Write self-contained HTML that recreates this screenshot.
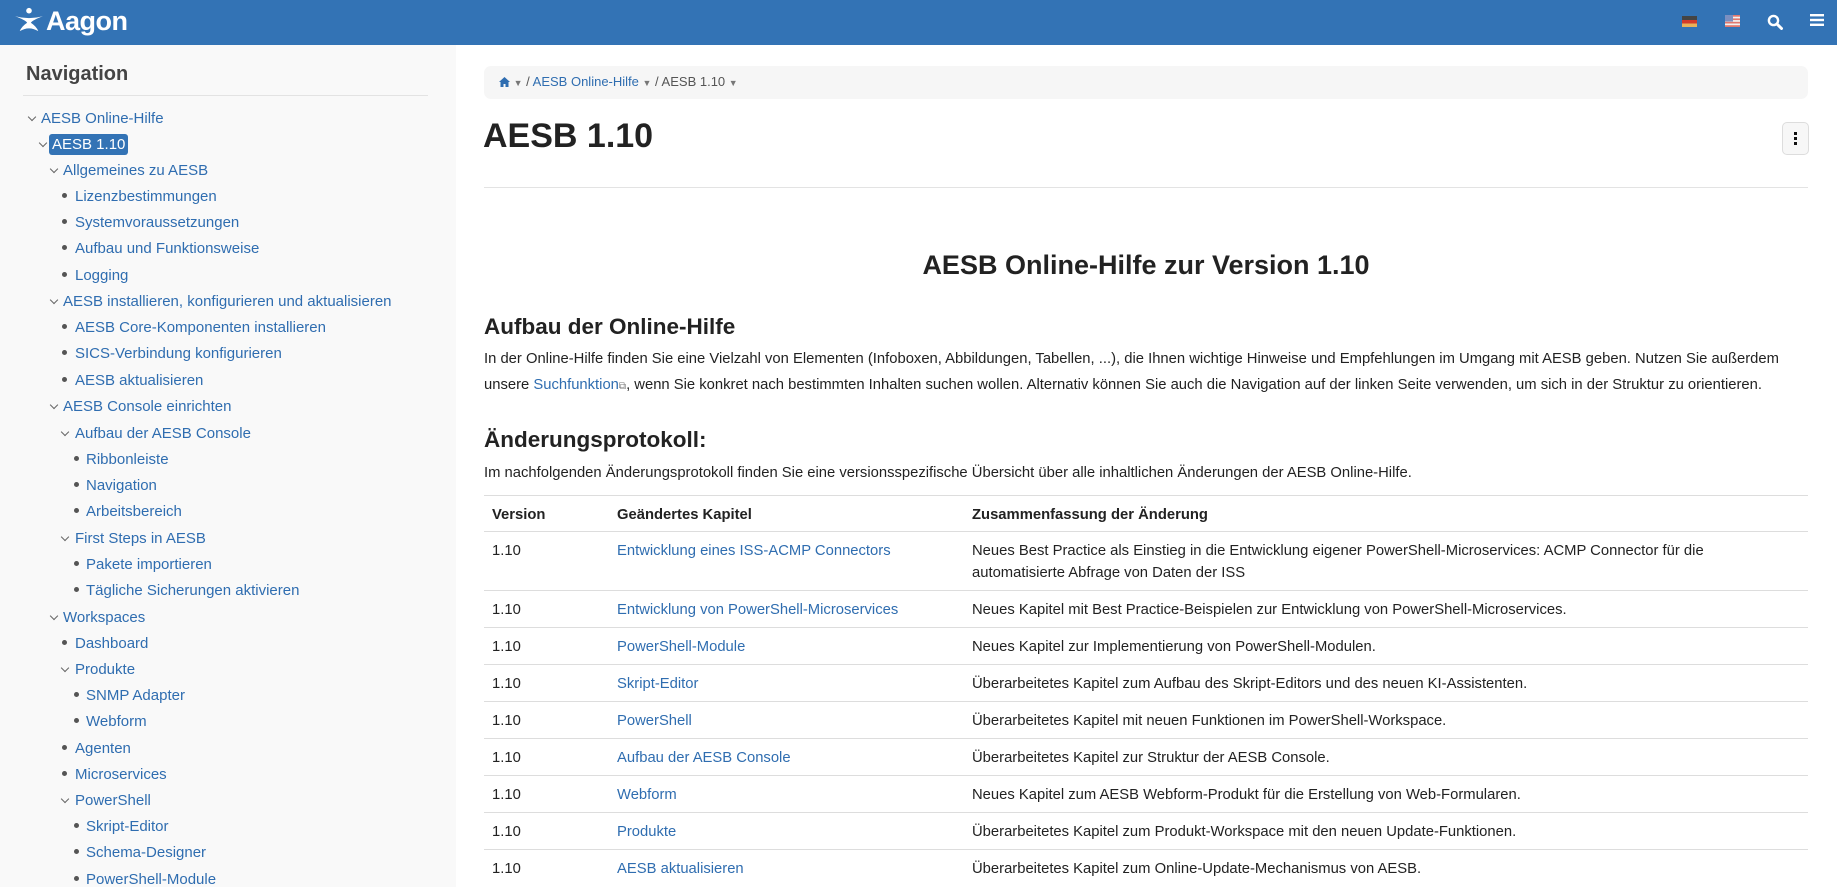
<!DOCTYPE html>
<html><head><meta charset="utf-8"><style>
*{box-sizing:border-box;margin:0;padding:0}
body{width:1837px;height:887px;overflow:hidden;font-family:"Liberation Sans",Arial,sans-serif;background:#fff;color:#222;position:relative}
a{color:#2f6db0;text-decoration:none}
.hdr{position:absolute;left:0;top:0;width:1837px;height:45px;background:#3373b5}
.side{position:absolute;left:0;top:45px;width:456px;height:842px;background:#f9f9f9}
.nt{position:absolute;left:26px;font-size:20px;font-weight:bold;color:#444}
.nh{position:absolute;left:23px;width:405px;border-top:1px solid #e3e3e3}
.it{position:absolute;font-size:15px;color:#2f6db0;white-space:nowrap;line-height:18px}
.ch{position:absolute;width:6px;height:6px;border-right:1.3px solid #666;border-bottom:1.3px solid #666;transform:rotate(45deg)}
.dt{position:absolute;width:5px;height:5px;border-radius:50%;background:#555;margin-top:-2px}
.sel{background:#3373b5;color:#fff;border-radius:3px;padding:2px 3px;margin-left:-3px}
.m{position:absolute;font-size:15px}
table{position:absolute;left:484px;top:495px;width:1324px;border-collapse:collapse;font-size:14.8px}
td,th{border-top:1px solid #ddd;padding:0 8px;text-align:left;vertical-align:top;line-height:22px}
th{height:36px;padding-top:8px;font-weight:bold}
td{height:37px;padding-top:8px}
</style></head><body>
<div class="hdr">
<svg style="position:absolute;left:14px;top:7px" width="30" height="26" viewBox="0 0 32 28"><circle cx="16" cy="4" r="3" fill="#fff"/><path d="M1 10 Q16 14 31 10 Q20 14 18 17 Q24 21 26 26 Q16 20 6 26 Q8 21 14 17 Q12 14 1 10Z" fill="#fff"/></svg>
<div style="position:absolute;left:46px;top:6px;color:#fff;font-size:27px;font-weight:bold;letter-spacing:-0.5px">Aagon</div>
<svg style="position:absolute;left:1682px;top:16px" width="15" height="11"><rect width="15" height="4" fill="#444"/><rect y="4" width="15" height="4" fill="#d23b2a"/><rect y="7.5" width="15" height="3.5" fill="#e8b25a"/></svg>
<svg style="position:absolute;left:1725px;top:15px" width="15" height="12"><rect width="15" height="12" fill="#f2f2f2"/><rect y="0" width="15" height="1.7" fill="#e0786e"/><rect y="3.4" width="15" height="1.7" fill="#e0786e"/><rect y="6.8" width="15" height="1.7" fill="#e0786e"/><rect y="10.2" width="15" height="1.8" fill="#e0786e"/><rect width="8" height="6.5" fill="#7c8fc0"/></svg>
<svg style="position:absolute;left:1767px;top:14px" width="16" height="16"><circle cx="6.5" cy="6.5" r="4.6" fill="none" stroke="#fff" stroke-width="2.4"/><path d="M10 10 L14.5 14.5" stroke="#fff" stroke-width="3" stroke-linecap="round"/></svg>
<svg style="position:absolute;left:1810px;top:14px" width="14" height="12"><rect y="0" width="14" height="2.4" fill="#fff"/><rect y="4.8" width="14" height="2.4" fill="#fff"/><rect y="9.6" width="14" height="2.4" fill="#fff"/></svg>
</div>
<div class="side">
<div class="nt" style="top:18px">Navigation</div>
<div class="nh" style="top:50px"></div>
</div>
<div style="position:absolute;left:484px;top:66px;width:1324px;height:33px;background:#f6f6f6;border-radius:7px"></div>
<div style="position:absolute;left:499px;top:74px;font-size:13px;color:#555;white-space:nowrap">
<svg width="11" height="10" viewBox="0 0 11 10" style="vertical-align:-1px"><path d="M5.5 0 L11 5 L9.5 5 L9.5 10 L6.5 10 L6.5 7 L4.5 7 L4.5 10 L1.5 10 L1.5 5 L0 5Z" fill="#2f6db0"/></svg> <span style="color:#777;font-size:9px">▼</span> / <a>AESB Online-Hilfe</a> <span style="color:#777;font-size:9px">▼</span> / AESB 1.10 <span style="color:#777;font-size:9px">▼</span></div>
<div style="position:absolute;left:483px;top:117px;font-size:34px;font-weight:bold;color:#222">AESB 1.10</div>
<div style="position:absolute;left:1782px;top:122px;width:27px;height:33px;border:1px solid #ddd;border-radius:5px;background:#f7f7f7"></div>
<div style="position:absolute;left:1794px;top:132px;width:3px;height:13px;background:repeating-linear-gradient(#111 0 3px,transparent 3px 5px)"></div>
<div style="position:absolute;left:484px;top:187px;width:1324px;border-top:1px solid #e3e3e3"></div>
<div style="position:absolute;left:484px;top:250px;width:1324px;text-align:center;font-size:27px;font-weight:bold">AESB Online-Hilfe zur Version 1.10</div>
<div class="m" style="left:484px;top:314px;font-size:22.5px;font-weight:bold">Aufbau der Online-Hilfe</div>
<div class="m" style="left:484px;top:346px;width:1330px;line-height:26px;font-size:14.8px">In der Online-Hilfe finden Sie eine Vielzahl von Elementen (Infoboxen, Abbildungen, Tabellen, ...), die Ihnen wichtige Hinweise und Empfehlungen im Umgang mit AESB geben. Nutzen Sie außerdem unsere <a>Suchfunktion</a><span style="font-size:10px;color:#777">⧉</span>, wenn Sie konkret nach bestimmten Inhalten suchen wollen. Alternativ können Sie auch die Navigation auf der linken Seite verwenden, um sich in der Struktur zu orientieren.</div>
<div class="m" style="left:484px;top:427px;font-size:22.5px;font-weight:bold">Änderungsprotokoll:</div>
<div class="m" style="left:484px;top:465px;font-size:14.8px">Im nachfolgenden Änderungsprotokoll finden Sie eine versionsspezifische Übersicht über alle inhaltlichen Änderungen der AESB Online-Hilfe.</div>
<table>
<tr><th style="width:125px">Version</th><th style="width:355px">Geändertes Kapitel</th><th>Zusammenfassung der Änderung</th></tr>
<tr><td style="height:59px">1.10</td><td><a>Entwicklung eines ISS-ACMP Connectors</a></td><td>Neues Best Practice als Einstieg in die Entwicklung eigener PowerShell-Microservices: ACMP Connector für die<br>automatisierte Abfrage von Daten der ISS</td></tr>
<tr><td>1.10</td><td><a>Entwicklung von PowerShell-Microservices</a></td><td>Neues Kapitel mit Best Practice-Beispielen zur Entwicklung von PowerShell-Microservices.</td></tr>
<tr><td>1.10</td><td><a>PowerShell-Module</a></td><td>Neues Kapitel zur Implementierung von PowerShell-Modulen.</td></tr>
<tr><td>1.10</td><td><a>Skript-Editor</a></td><td>Überarbeitetes Kapitel zum Aufbau des Skript-Editors und des neuen KI-Assistenten.</td></tr>
<tr><td>1.10</td><td><a>PowerShell</a></td><td>Überarbeitetes Kapitel mit neuen Funktionen im PowerShell-Workspace.</td></tr>
<tr><td>1.10</td><td><a>Aufbau der AESB Console</a></td><td>Überarbeitetes Kapitel zur Struktur der AESB Console.</td></tr>
<tr><td>1.10</td><td><a>Webform</a></td><td>Neues Kapitel zum AESB Webform-Produkt für die Erstellung von Web-Formularen.</td></tr>
<tr><td>1.10</td><td><a>Produkte</a></td><td>Überarbeitetes Kapitel zum Produkt-Workspace mit den neuen Update-Funktionen.</td></tr>
<tr><td>1.10</td><td><a>AESB aktualisieren</a></td><td>Überarbeitetes Kapitel zum Online-Update-Mechanismus von AESB.</td></tr>
</table>
<div class="ch" style="left:29px;top:114px"></div><div class="it" style="left:41px;top:110px">AESB Online-Hilfe</div>
<div class="ch" style="left:40px;top:140px"></div><div class="it" style="left:52px;top:136px"><span class="sel">AESB 1.10</span></div>
<div class="ch" style="left:51px;top:166px"></div><div class="it" style="left:63px;top:162px">Allgemeines zu AESB</div>
<div class="dt" style="left:62px;top:195px"></div><div class="it" style="left:75px;top:188px">Lizenzbestimmungen</div>
<div class="dt" style="left:62px;top:221px"></div><div class="it" style="left:75px;top:214px">Systemvoraussetzungen</div>
<div class="dt" style="left:62px;top:247px"></div><div class="it" style="left:75px;top:240px">Aufbau und Funktionsweise</div>
<div class="dt" style="left:62px;top:274px"></div><div class="it" style="left:75px;top:267px">Logging</div>
<div class="ch" style="left:51px;top:297px"></div><div class="it" style="left:63px;top:293px">AESB installieren, konfigurieren und aktualisieren</div>
<div class="dt" style="left:62px;top:326px"></div><div class="it" style="left:75px;top:319px">AESB Core-Komponenten installieren</div>
<div class="dt" style="left:62px;top:352px"></div><div class="it" style="left:75px;top:345px">SICS-Verbindung konfigurieren</div>
<div class="dt" style="left:62px;top:379px"></div><div class="it" style="left:75px;top:372px">AESB aktualisieren</div>
<div class="ch" style="left:51px;top:402px"></div><div class="it" style="left:63px;top:398px">AESB Console einrichten</div>
<div class="ch" style="left:62px;top:429px"></div><div class="it" style="left:75px;top:425px">Aufbau der AESB Console</div>
<div class="dt" style="left:74px;top:458px"></div><div class="it" style="left:86px;top:451px">Ribbonleiste</div>
<div class="dt" style="left:74px;top:484px"></div><div class="it" style="left:86px;top:477px">Navigation</div>
<div class="dt" style="left:74px;top:510px"></div><div class="it" style="left:86px;top:503px">Arbeitsbereich</div>
<div class="ch" style="left:62px;top:534px"></div><div class="it" style="left:75px;top:530px">First Steps in AESB</div>
<div class="dt" style="left:74px;top:563px"></div><div class="it" style="left:86px;top:556px">Pakete importieren</div>
<div class="dt" style="left:74px;top:589px"></div><div class="it" style="left:86px;top:582px">Tägliche Sicherungen aktivieren</div>
<div class="ch" style="left:51px;top:613px"></div><div class="it" style="left:63px;top:609px">Workspaces</div>
<div class="dt" style="left:62px;top:642px"></div><div class="it" style="left:75px;top:635px">Dashboard</div>
<div class="ch" style="left:62px;top:665px"></div><div class="it" style="left:75px;top:661px">Produkte</div>
<div class="dt" style="left:74px;top:694px"></div><div class="it" style="left:86px;top:687px">SNMP Adapter</div>
<div class="dt" style="left:74px;top:720px"></div><div class="it" style="left:86px;top:713px">Webform</div>
<div class="dt" style="left:62px;top:747px"></div><div class="it" style="left:75px;top:740px">Agenten</div>
<div class="dt" style="left:62px;top:773px"></div><div class="it" style="left:75px;top:766px">Microservices</div>
<div class="ch" style="left:62px;top:796px"></div><div class="it" style="left:75px;top:792px">PowerShell</div>
<div class="dt" style="left:74px;top:825px"></div><div class="it" style="left:86px;top:818px">Skript-Editor</div>
<div class="dt" style="left:74px;top:851px"></div><div class="it" style="left:86px;top:844px">Schema-Designer</div>
<div class="dt" style="left:74px;top:878px"></div><div class="it" style="left:86px;top:871px">PowerShell-Module</div>
</body></html>
